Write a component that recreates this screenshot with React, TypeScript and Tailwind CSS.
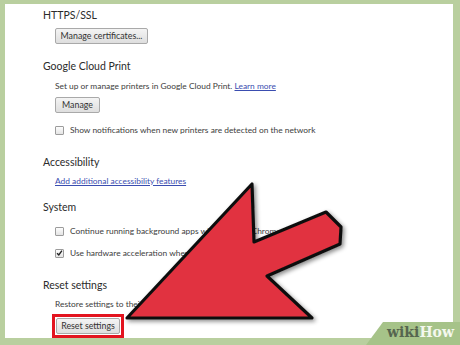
import React from 'react';

const font = { fontFamily: 'Lato, "Noto Sans", sans-serif' };

function Heading({ children, className = '' }: { children: React.ReactNode; className?: string }) {
    return (
        <div className={`h-[14px] flex items-center text-[10.5px] text-[#2b2b2b] whitespace-nowrap ${className}`}>{children}</div>
    );
}

function Line({ children, className = '' }: { children: React.ReactNode; className?: string }) {
    return (
        <div className={`h-[14px] ml-3 flex items-center text-[8.4px] text-[#3c3c3c] whitespace-nowrap ${className}`}>
            {children}
        </div>
    );
}

function Button({ children, className = '' }: { children: React.ReactNode; className?: string }) {
    return (
        <div
            className={`flex items-center justify-center h-[16px] text-[8.8px] leading-none whitespace-nowrap text-[#333] border border-[#a9a9a9] rounded-[2px] bg-gradient-to-b from-[#f4f4f4] to-[#dedede] ${className}`}
        >
            {children}
        </div>
    );
}

function Checkbox({ checked = false }: { checked?: boolean }) {
    return (
        <div className="w-[9px] h-[9px] mr-[6px] border border-[#9c9c9c] rounded-[1px] bg-gradient-to-b from-[#fdfdfd] to-[#e4e4e4] flex items-center justify-center">
            {checked && (
                <svg width="8" height="8" viewBox="0 0 8 8">
                    <path d="M1.2 4.2 L3.2 6.2 L6.8 1.2" fill="none" stroke="#222" strokeWidth="1.6" />
                </svg>
            )}
        </div>
    );
}

export default function App() {
    return (
        <div className="relative w-[460px] h-[345px] bg-[#b9cf9f] overflow-hidden" style={font}>
            {/* Settings panel */}
            <div className="absolute left-[5px] top-[4px] w-[448px] h-[334px] bg-white pl-[38px] pt-[5px] flex flex-col">
                <Heading>HTTPS/SSL</Heading>
                <div className="ml-3 mt-[5px] flex">
                    <Button className="w-[93px]">Manage certificates...</Button>
                </div>

                <Heading className="mt-[16px]">Google Cloud Print</Heading>
                <Line className="mt-[5px]">
                    Set up or manage printers in Google Cloud Print.&nbsp;
                    <span className="text-[#3a4db0] underline">Learn more</span>
                </Line>
                <div className="ml-3 mt-[4px] flex">
                    <Button className="w-[45px] h-[15px]">Manage</Button>
                </div>
                <Line className="mt-[10px]">
                    <Checkbox />
                    Show notifications when new printers are detected on the network
                </Line>

                <Heading className="mt-[19px]">Accessibility</Heading>
                <Line className="mt-[4px]">
                    <span className="text-[#3a4db0] underline">Add additional accessibility features</span>
                </Line>

                <Heading className="mt-[13px]">System</Heading>
                <Line className="mt-[9px]">
                    <Checkbox />
                    Continue running background apps when Google Chrome is closed
                </Line>
                <Line className="mt-[8px]">
                    <Checkbox checked />
                    Use hardware acceleration when available
                </Line>

                <Heading className="mt-[19px]">Reset settings</Heading>
                <Line className="mt-[4px]">Restore settings to their original defaults.</Line>
                <div className="ml-[9px] mt-[3px] self-start flex border-[3px] border-[#e3141f] p-[1px]">
                    <Button className="w-[64px] h-[15px]">Reset settings</Button>
                </div>
            </div>

            {/* wikiHow tab */}
            <svg className="absolute left-0 top-0" width="460" height="345" viewBox="0 0 460 345">
                <polygon points="383,322 460,322 460,345 366,345" fill="#a6c389" />
            </svg>
            <div
                className="absolute left-[387px] top-[324px] text-[14px] font-bold leading-[17px] whitespace-nowrap"
                style={{ fontFamily: '"DejaVu Serif", "Liberation Serif", serif' }}
            >
                <span className="text-[#56654f]">wiki</span>
                <span className="text-[#f4f8ef]">How</span>
            </div>

            {/* Red arrow */}
            <svg className="absolute left-0 top-0" width="460" height="345" viewBox="0 0 460 345">
                <defs>
                    <filter id="sh" x="-20%" y="-20%" width="140%" height="140%">
                        <feDropShadow dx="2" dy="2" stdDeviation="2" floodColor="#000" floodOpacity="0.45" />
                    </filter>
                </defs>
                <polygon
                    points="127,318 252,184 254,242 326,212 341,227 340,244 267,276 312,318"
                    fill="#e1323f"
                    stroke="#111"
                    strokeWidth="3.2"
                    strokeLinejoin="round"
                    filter="url(#sh)"
                />
            </svg>
        </div>
    );
}
